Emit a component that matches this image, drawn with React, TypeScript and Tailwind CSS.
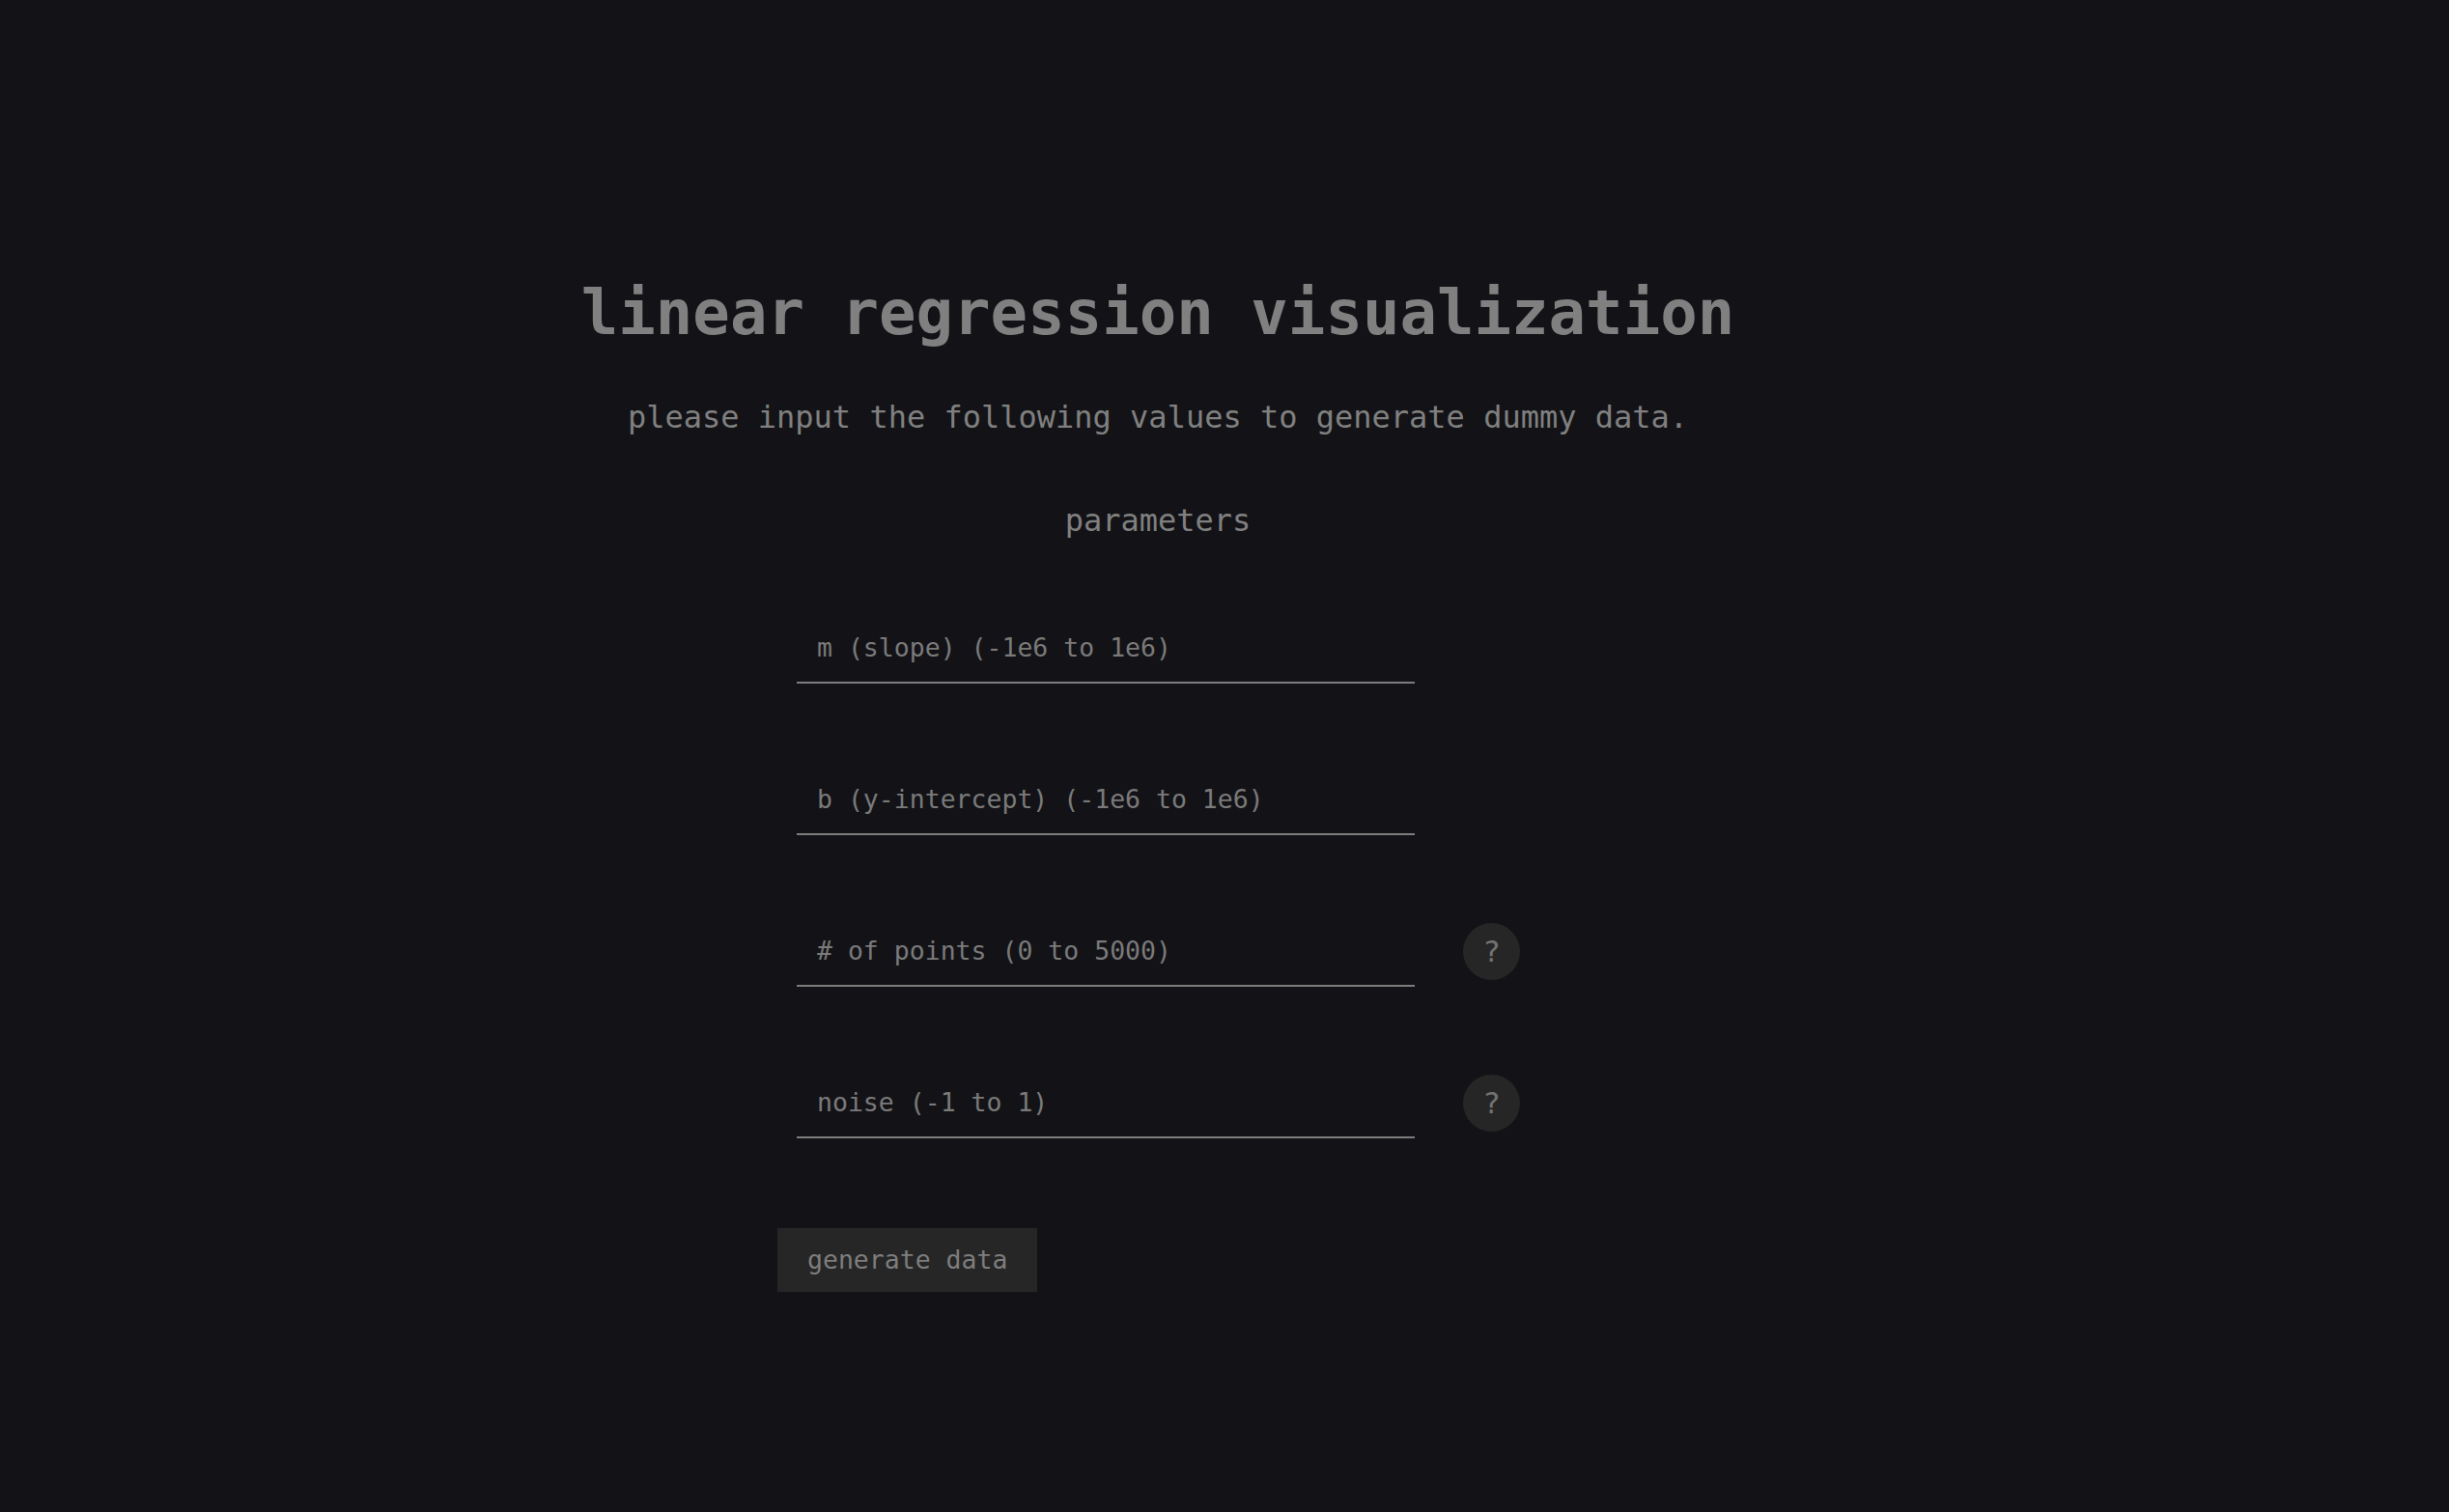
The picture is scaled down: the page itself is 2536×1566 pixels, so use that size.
import { useState } from "react";

const fields = [
  { id: "m", placeholder: "m (slope) (-1e6 to 1e6)", help: false },
  { id: "b", placeholder: "b (y-intercept) (-1e6 to 1e6)", help: false },
  { id: "n", placeholder: "# of points (0 to 5000)", help: true },
  { id: "noise", placeholder: "noise (-1 to 1)", help: true },
];

export default function App() {
  const [values, setValues] = useState<Record<string, string>>({});

  return (
    <div className="min-h-screen w-full bg-[#131317] font-['DejaVu_Sans_Mono',monospace] text-[#808080]">
      <div className="flex justify-center pr-[138px]">
        <div className="flex flex-col items-center pt-[292px]">
          <h1 className="text-[64px] font-bold leading-[64px] tracking-normal">
            linear regression visualization
          </h1>
          <p className="mt-[56px] text-[32px] leading-[40px]">
            please input the following values to generate dummy data.
          </p>
          <h2 className="mt-[67px] text-[32px] leading-[40px]">parameters</h2>

          <form className="mt-[75px] flex w-[788px] flex-col">
            <div className="flex flex-col gap-[83px]">
              {fields.map((f) => (
                <div key={f.id} className="flex items-center pl-[20px]">
                  <input
                    type="text"
                    value={values[f.id] ?? ""}
                    onChange={(e) =>
                      setValues({ ...values, [f.id]: e.target.value })
                    }
                    placeholder={f.placeholder}
                    className="h-[74px] w-[640px] border-b-2 border-[#7d7d7d] bg-transparent px-[21px] text-[26.5px] text-[#9a9a9a] outline-none placeholder:text-[#7a7a7a]"
                  />
                  {f.help && (
                    <button
                      type="button"
                      className="ml-[50px] flex h-[59px] w-[59px] items-center justify-center rounded-full bg-[#262626] text-[31px] text-[#727272]"
                    >
                      ?
                    </button>
                  )}
                </div>
              ))}
            </div>

            <div className="mt-[93px]">
              <button
                type="button"
                className="h-[66px] bg-[#262626] px-[31px] text-[26.5px] text-[#7d7d7d]"
              >
                generate data
              </button>
            </div>
          </form>
        </div>
      </div>
    </div>
  );
}
